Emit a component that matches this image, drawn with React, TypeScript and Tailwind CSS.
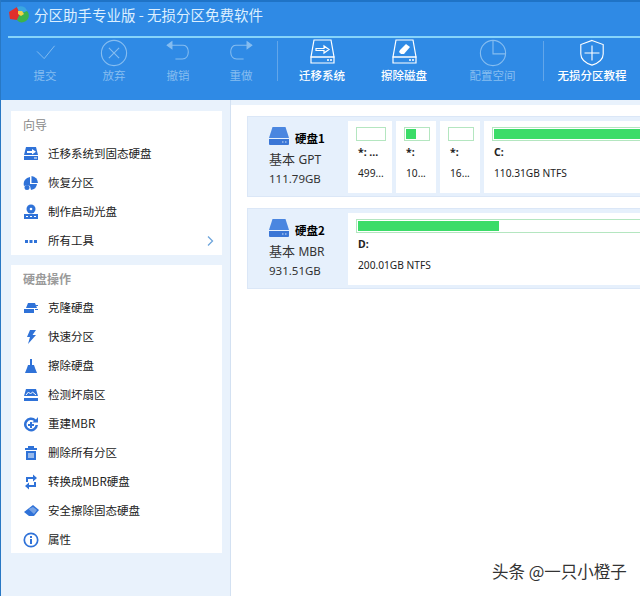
import type { ReactNode } from 'react';

const cjk = "font-['Noto_Sans_CJK_SC',sans-serif]";

function ToolItem({ label, width, off, children }: { label: string; width: string; off?: boolean; children: ReactNode }) {
  return (
    <div className={`${width} flex flex-col items-center shrink-0 ${off ? 'text-[#86bdf0]' : 'text-white'}`}>
      <div className="h-[28px] flex items-center justify-center">{children}</div>
      <span className={`text-[11.5px] leading-[16px] whitespace-nowrap ${off ? 'font-normal' : 'font-medium'}`}>{label}</span>
    </div>
  );
}

function ToolIcon({ children, size = 30 }: { children: ReactNode; size?: number }) {
  return (
    <svg width={size} height={size} viewBox="0 0 30 30" fill="none" stroke="currentColor" strokeWidth="1.2">
      {children}
    </svg>
  );
}

function DiskOutline({ children }: { children: ReactNode }) {
  return (
    <ToolIcon>
      <path d="M7 2h17l3 17H4z" />
      <path d="M4 19h23v6H4z" />
      <path d="M20 22h2M23 22h2" strokeWidth="1.5" />
      {children}
    </ToolIcon>
  );
}

function SideRow({ label, icon, more }: { label: ReactNode; icon: ReactNode; more?: boolean }) {
  return (
    <div className="h-[29px] flex items-center pl-[12px] pr-[8px]">
      <div className="w-4 h-4 mr-[9px] text-[#2f72d8] shrink-0">{icon}</div>
      <span className="text-[11.5px] text-[#222] whitespace-nowrap flex-1">{label}</span>
      {more && (
        <svg width="8" height="12" viewBox="0 0 8 12" fill="none" stroke="#6ea5dc" strokeWidth="1.3">
          <path d="M2 1.5 6.500 6 2 10.500" />
        </svg>
      )}
    </div>
  );
}

function Glyph({ children }: { children: ReactNode }) {
  return (
    <svg width="16" height="16" viewBox="0 0 16 16" fill="currentColor">
      {children}
    </svg>
  );
}

function DiskIcon() {
  return (
    <svg width="20" height="18" viewBox="0 0 20 18" className="shrink-0">
      <path d="M3.500 0h13L20 11H0z" fill="#4a86e0" />
      <path d="M0 12h20v5a1 1 0 0 1-1 1H1a1 1 0 0 1-1-1z" fill="#3a76d6" />
      <path d="M13 15h1.500M16 15h1.500" stroke="#cfe0f8" strokeWidth="1.200" />
    </svg>
  );
}

function DiskInfo({ name, type, size }: { name: string; type: string; size: string }) {
  return (
    <div className="w-[100px] shrink-0 pl-[21px] pt-[6px] text-[#333]">
      <div className="flex items-end h-[18px]">
        <DiskIcon />
        <span className="ml-[6px] text-[11.5px] leading-[14px] font-bold text-black whitespace-nowrap">{name}</span>
      </div>
      <div className="mt-[5px] text-[13px] leading-[18px] font-['Noto_Sans','Noto_Sans_CJK_SC',sans-serif] whitespace-nowrap">
        基本 <span className="text-[12px]">{type}</span>
      </div>
      <div className="mt-[1px] text-[11.5px] leading-[17px] font-['Noto_Sans',sans-serif]">{size}</div>
    </div>
  );
}

function Partition({ width, name, info, used }: { width: string; name: string; info: string; used: string }) {
  return (
    <div className={`${width} shrink-0 h-[72px] bg-white pt-[6px] pl-[8px] pr-[6px]`}>
      <div className="h-[14px] border border-[#b4e6c0] bg-white p-[1px]">
        <div className="h-full bg-[#3bdc68]" style={{ width: used }} />
      </div>
      <div className="ml-[2px] font-['Noto_Sans',sans-serif] text-[#222]">
        <div className="mt-[4px] text-[10.5px] leading-[14px] font-bold whitespace-nowrap">{name}</div>
        <div className="mt-[7px] text-[10.2px] leading-[14px] whitespace-nowrap">{info}</div>
      </div>
    </div>
  );
}

export default function App() {
  return (
    <div className={`${cjk} relative w-[640px] h-[596px] overflow-hidden bg-white border-l border-[#2878c4] flex flex-col`}>
      <header className="h-[100px] shrink-0 bg-[#2f8ae5] border-t-2 border-[#1f73c6]">
        <div className="h-[34px] flex items-center pl-[7px] pb-[8px]">
          <svg width="22" height="20" viewBox="0 0 22 20">
            <path d="M9 2 1 7l1 7 7 1 3-6z" fill="#e0302c" />
            <path d="M9 2c5-2 9 0 10 4l-7 3z" fill="#3aa7e0" />
            <path d="M19 6c3 3 2 8-1 10-3 2-7 2-9-1l3-6z" fill="#3cb34a" />
            <path d="M10 6h4l2 3-3 2-3-2z" fill="#f4d24a" />
          </svg>
          <span className="ml-[4px] text-[14.5px] text-[#dcefff] whitespace-nowrap">分区助手专业版 - 无损分区免费软件</span>
        </div>
        <div className="ml-[7px] h-[2px] bg-[#86d4fa]" />
        <div className="flex pl-[12px] pt-[1px]">
          <ToolItem label="提交" width="w-[64px]" off>
            <ToolIcon size={24}><path d="M5 13l9 9L27 6" /></ToolIcon>
          </ToolItem>
          <ToolItem label="放弃" width="w-[74px]" off>
            <ToolIcon size={28}><circle cx="15" cy="15" r="13.500" /><path d="M9.500 9.500l11 11M20.500 9.500l-11 11" /></ToolIcon>
          </ToolItem>
          <ToolItem label="撤销" width="w-[54px]" off>
            <ToolIcon size={26}><path d="M5 6h16c8 0 8 16-1 16h-8" /><path d="M8 2 2.500 6 8 10z" fill="currentColor" /></ToolIcon>
          </ToolItem>
          <ToolItem label="重做" width="w-[72px]" off>
            <ToolIcon size={26}><path d="M25 6H9c-8 0-8 16 1 16h8" /><path d="M22 2l5.500 4L22 10z" fill="currentColor" /></ToolIcon>
          </ToolItem>
          <div className="w-[1px] h-[40px] mt-[2px] bg-[#62a6ea] shrink-0" />
          <ToolItem label="迁移系统" width="w-[88px]">
            <DiskOutline>
              <path d="M9 10.500h8V8l5 3.500-5 3.500v-2.500H9z" />
            </DiskOutline>
          </ToolItem>
          <ToolItem label="擦除磁盘" width="w-[76px]">
            <DiskOutline>
              <path d="M11 12l6-6 4 3-6 7h-3l-2-2z" fill="currentColor" stroke="none" />
            </DiskOutline>
          </ToolItem>
          <ToolItem label="配置空间" width="w-[101px]" off>
            <ToolIcon size={28}><circle cx="15" cy="15" r="13.500" /><path d="M15 1.500V16h13.500" /></ToolIcon>
          </ToolItem>
          <div className="w-[1px] h-[40px] mt-[2px] bg-[#62a6ea] shrink-0" />
          <ToolItem label="无损分区教程" width="w-[96px]">
            <ToolIcon size={28}><path d="M15 1.500 27 6v10c0 6-6 10-12 12C9 26 3 22 3 16V6z" /><path d="M15 7v16M7 15h16" /></ToolIcon>
          </ToolItem>
        </div>
      </header>

      <div className="flex-1 flex min-h-0">
        <aside className="w-[230px] shrink-0 bg-[#e9f2fc] border-r border-[#d3e1f2] pl-[10px] pt-[11px]">
          <section className="w-[211px] h-[144px] bg-white">
            <div className="h-[28px] pl-[12px] flex items-center text-[12px] text-[#8a8a8a]">向导</div>
            <SideRow label="迁移系统到固态硬盘" icon={<Glyph><path d="M3 1h10l2 8H1z" /><path d="M1 10h14v4H1z" /><path d="M4 5h5V3l4 2.800-4 2.700V7H4z" fill="#fff" /><path d="M11 12h3" stroke="#fff" /></Glyph>} />
            <SideRow label="恢复分区" icon={<Glyph><path d="M8.500 1a7 7 0 0 1 6.500 7H8.500z" /><path d="M7 2v7h7a7 7 0 0 1-6 6l-1-4-3-1-3 1a7 7 0 0 1 6-9z" /><circle cx="4" cy="12.500" r="2.500" /></Glyph>} />
            <SideRow label="制作启动光盘" icon={<Glyph><circle cx="8" cy="5" r="4.500" /><circle cx="8" cy="5" r="1.300" fill="#fff" /><path d="M1 10h14v5H1z" /><path d="M3 12.500h2M7 12.500h2M11 12.500h2" stroke="#fff" /></Glyph>} />
            <SideRow label="所有工具" more icon={<Glyph><rect x="2" y="7" width="3" height="3" /><rect x="6.500" y="7" width="3" height="3" /><rect x="11" y="7" width="3" height="3" /></Glyph>} />
          </section>
          <section className="mt-[10px] w-[211px] h-[288px] bg-white">
            <div className="h-[28px] pl-[12px] flex items-center text-[12px] font-bold text-[#9a9a9a]">硬盘操作</div>
            <SideRow label="克隆硬盘" icon={<Glyph><path d="M5 3h7l2 5H3z" /><path d="M1 9h10v4H1z" /><path d="M12 9h3v1h-3zM13 5h2v1h-2z" /></Glyph>} />
            <SideRow label="快速分区" icon={<Glyph><path d="M7 1h6L9.500 6H13L5 15l2-7H4z" /></Glyph>} />
            <SideRow label="擦除硬盘" icon={<Glyph><path d="M7 1h2v6H7z" /><path d="M5 7h6l1 3H4z" /><path d="M4 10h8l2 5H2z" /></Glyph>} />
            <SideRow label="检测坏扇区" icon={<Glyph><path d="M3 2h10l2 7H1z" /><path d="M1 11h14v3H1z" /><path d="M3 8l2.500-3 2 2 2-2L13 8" fill="none" stroke="#fff" /></Glyph>} />
            <SideRow label="重建MBR" icon={<Glyph><path d="M13 3.500A7 7 0 1 0 15 9h-2.500A4.500 4.500 0 1 1 11 5L9 6.500h6V1z" /><path d="M7 6h2v2h2v2H9v2H7v-2H5V8h2z" /></Glyph>} />
            <SideRow label="删除所有分区" icon={<Glyph><path d="M5 1h6v2h3v2H2V3h3z" /><path d="M3 6h10v9H3z" /><path d="M6 8v5M8 8v5M10 8v5" stroke="#fff" /></Glyph>} />
            <SideRow label="转换成MBR硬盘" icon={<Glyph><path d="M3 3h7V0.500L14 4l-4 3.500V5H5v3H3z" /><path d="M13 13H6v2.500L2 12l4-3.500V11h5V8h2z" /></Glyph>} />
            <SideRow label="安全擦除固态硬盘" icon={<Glyph><path d="M10 2l6 5-5 6H6L1 9z" /><path d="M5.500 6 11 11l3-4-4-3z" fill="#fff" opacity="0.35" /></Glyph>} />
            <SideRow label="属性" icon={<svg width="16" height="16" viewBox="0 0 16 16"><circle cx="8" cy="8" r="6.700" fill="none" stroke="currentColor" strokeWidth="1.700" /><path d="M7 7h2v5H7zM7 4h2v2H7z" fill="currentColor" /></svg>} />
          </section>
        </aside>

        <main className="flex-1 min-w-0 overflow-hidden">
          <div className="h-[5px] bg-[#e9f2fc]" />
          <div className="pl-[16px] pt-[11px] flex flex-col gap-[11px]">
            <div className="h-[81px] bg-[#e6f0fc] border border-[#dbe7f7] flex pt-[4px] -mr-[40px]">
              <DiskInfo name="硬盘1" type="GPT" size="111.79GB" />
              <div className="flex gap-[4px]">
                <Partition width="w-[44px]" name="*: ..." info="499..." used="0%" />
                <Partition width="w-[40px]" name="*:" info="10..." used="45%" />
                <Partition width="w-[40px]" name="*:" info="16..." used="0%" />
                <Partition width="w-[200px]" name="C:" info="110.31GB NTFS" used="100%" />
              </div>
            </div>
            <div className="h-[81px] bg-[#e6f0fc] border border-[#dbe7f7] flex pt-[4px] -mr-[40px]">
              <DiskInfo name="硬盘2" type="MBR" size="931.51GB" />
              <Partition width="w-[400px]" name="D:" info="200.01GB NTFS" used="37%" />
            </div>
          </div>
        </main>
      </div>

      <div className="absolute left-[491px] top-[560px] text-[16.5px] leading-[22px] text-[#333] whitespace-nowrap [text-shadow:0_0_2px_#fff]">
        头条 @一只小橙子
      </div>
    </div>
  );
}
